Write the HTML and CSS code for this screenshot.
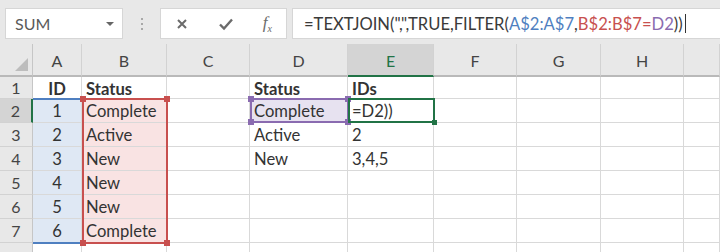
FILE: index.html
```html
<!DOCTYPE html>
<html>
<head>
  <link rel="stylesheet" href="styles.css">
  <title>TEXTJOIN FILTER</title>
</head>
<body>
  <div class="toolbar">
    <div class="namebox">
      <span>SUM</span>
      <span class="caret"></span>
    </div>
    <div class="grip"><i></i><i></i><i></i></div>
    <div class="fx-buttons">
      <svg width="14" height="14" viewBox="0 0 14 14"><path d="M3 3 L11 11 M11 3 L3 11" stroke="#6b6b6b" stroke-width="2" fill="none"/></svg>
      <svg width="16" height="14" viewBox="0 0 16 14"><path d="M2 7.5 L6 11.5 L14 2.5" stroke="#6b6b6b" stroke-width="2.4" fill="none"/></svg>
      <span class="fx">f<sub>x</sub></span>
    </div>
    <div class="formula">
      <span>=TEXTJOIN(",",TRUE,FILTER(</span><span class="ref-a">A$2:A$7</span><span>,</span><span class="ref-b">B$2:B$7=</span><span class="ref-d">D2</span><span>))</span><span class="cursor"></span>
    </div>
  </div>

  <div class="sheet">
    <div class="grid">
      <!-- column headers -->
      <div class="corner"><span class="tri"></span></div>
      <div class="colhead">A</div>
      <div class="colhead">B</div>
      <div class="colhead">C</div>
      <div class="colhead">D</div>
      <div class="colhead active">E</div>
      <div class="colhead">F</div>
      <div class="colhead">G</div>
      <div class="colhead">H</div>
      <div class="colhead"></div>

      <!-- row 1 -->
      <div class="rowhead">1</div>
      <div class="cell center bold">ID</div>
      <div class="cell bold">Status</div>
      <div class="cell"></div>
      <div class="cell bold">Status</div>
      <div class="cell bold">IDs</div>
      <div class="cell"></div>
      <div class="cell"></div>
      <div class="cell"></div>
      <div class="cell"></div>

      <!-- row 2 -->
      <div class="rowhead active">2</div>
      <div class="cell center blue">1</div>
      <div class="cell pink">Complete</div>
      <div class="cell"></div>
      <div class="cell purple">Complete</div>
      <div class="cell">=D2))</div>
      <div class="cell"></div>
      <div class="cell"></div>
      <div class="cell"></div>
      <div class="cell"></div>

      <!-- row 3 -->
      <div class="rowhead">3</div>
      <div class="cell center blue">2</div>
      <div class="cell pink">Active</div>
      <div class="cell"></div>
      <div class="cell">Active</div>
      <div class="cell">2</div>
      <div class="cell"></div>
      <div class="cell"></div>
      <div class="cell"></div>
      <div class="cell"></div>

      <!-- row 4 -->
      <div class="rowhead">4</div>
      <div class="cell center blue">3</div>
      <div class="cell pink">New</div>
      <div class="cell"></div>
      <div class="cell">New</div>
      <div class="cell">3,4,5</div>
      <div class="cell"></div>
      <div class="cell"></div>
      <div class="cell"></div>
      <div class="cell"></div>

      <!-- row 5 -->
      <div class="rowhead">5</div>
      <div class="cell center blue">4</div>
      <div class="cell pink">New</div>
      <div class="cell"></div>
      <div class="cell"></div>
      <div class="cell"></div>
      <div class="cell"></div>
      <div class="cell"></div>
      <div class="cell"></div>
      <div class="cell"></div>

      <!-- row 6 -->
      <div class="rowhead">6</div>
      <div class="cell center blue">5</div>
      <div class="cell pink">New</div>
      <div class="cell"></div>
      <div class="cell"></div>
      <div class="cell"></div>
      <div class="cell"></div>
      <div class="cell"></div>
      <div class="cell"></div>
      <div class="cell"></div>

      <!-- row 7 -->
      <div class="rowhead">7</div>
      <div class="cell center blue">6</div>
      <div class="cell pink">Complete</div>
      <div class="cell"></div>
      <div class="cell"></div>
      <div class="cell"></div>
      <div class="cell"></div>
      <div class="cell"></div>
      <div class="cell"></div>
      <div class="cell"></div>

      <!-- row 8 (only its top shows) -->
      <div class="rowhead"></div>
      <div class="cell"></div>
      <div class="cell"></div>
      <div class="cell"></div>
      <div class="cell"></div>
      <div class="cell"></div>
      <div class="cell"></div>
      <div class="cell"></div>
      <div class="cell"></div>
      <div class="cell"></div>
    </div>

    <!-- range outlines drawn over the grid -->
    <div class="range range-a"></div>
    <div class="range range-b"><i class="tl"></i><i class="tr"></i><i class="bl"></i><i class="br"></i></div>
    <div class="range range-d"><i class="tl"></i><i class="tr"></i><i class="bl"></i><i class="br"></i></div>
    <div class="range range-e"><i class="br"></i></div>
  </div>
</body>
</html>
```

FILE: styles.css
```css
/* Excel formula bar + sheet */
body {
  margin: 0;
  height: 252px;
  background-color: #fff;
  font-family: Lato, "Open Sans", sans-serif;
  color: #333;
  overflow: hidden;
}

.toolbar {
  height: 44px;
  background-color: #e8e8e8;
  display: flex;
  align-items: flex-start;
  padding-top: 8px;
  box-sizing: border-box;
}

.namebox {
  width: 118px;
  height: 31px;
  margin-left: 5px;
  box-sizing: border-box;
  background-color: #fff;
  border: 1px solid #d6d6d6;
  display: flex;
  align-items: center;
  justify-content: space-between;
  padding: 0 8px 0 9px;
  font-size: 16px;
  color: #5a5a5a;
}

.caret {
  width: 0;
  height: 0;
  border-left: 4px solid transparent;
  border-right: 4px solid transparent;
  border-top: 4px solid #666;
}

.grip {
  width: 37px;
  height: 31px;
  display: flex;
  flex-direction: column;
  align-items: center;
  justify-content: center;
  gap: 3px;
}

.grip i {
  width: 2px;
  height: 2px;
  background-color: #a8a8a8;
}

.fx-buttons {
  width: 127px;
  height: 31px;
  box-sizing: border-box;
  background-color: #fff;
  border: 1px solid #d6d6d6;
  display: flex;
  align-items: center;
  justify-content: space-between;
  padding: 0 14px 0 14px;
}

.fx {
  font-family: "Liberation Serif", serif;
  font-style: italic;
  font-size: 17px;
  color: #6b6b6b;
}

.fx sub {
  font-size: 10px;
}

.formula {
  flex: 1;
  height: 31px;
  margin-left: 5px;
  box-sizing: border-box;
  background-color: #fff;
  border: 1px solid #d6d6d6;
  border-right: none;
  display: flex;
  align-items: center;
  padding-left: 11px;
  font-size: 16.6px;
  color: #3a3a3a;
  white-space: pre;
}

.ref-a { color: #4f7fc0; }
.ref-b { color: #c8504f; }
.ref-d { color: #8a6bb0; }

.cursor {
  width: 1px;
  height: 19px;
  margin-left: 2px;
  background-color: #333;
}

/* sheet */
.sheet {
  position: relative;
}

.grid {
  display: grid;
  grid-template-columns: 33px 49px 85px 83px 98px 86px 83px 84px 83px 1fr;
  grid-template-rows: 33px 22px repeat(6, 24px) 10px;
}

.corner {
  background-color: #e8e8e8;
  border-right: 1px solid #c6c6c6;
  border-bottom: 2px solid #b9b9b9;
  position: relative;
}

.tri {
  position: absolute;
  right: 4px;
  bottom: 4px;
  width: 0;
  height: 0;
  border-left: 13px solid transparent;
  border-bottom: 13px solid #bdbdbd;
}

.colhead {
  background-color: #e8e8e8;
  border-right: 1px solid #d2d2d2;
  border-bottom: 2px solid #b9b9b9;
  display: flex;
  align-items: center;
  justify-content: center;
  font-size: 16px;
  color: #444;
  padding-top: 2px;
}

.colhead.active {
  background-color: #d4d4d4;
  color: #217346;
  border-bottom-color: #217346;
}

.rowhead {
  background-color: #e8e8e8;
  border-right: 1px solid #c6c6c6;
  border-bottom: 1px solid #d2d2d2;
  display: flex;
  align-items: center;
  justify-content: center;
  font-size: 16px;
  color: #444;
}

.rowhead.active {
  background-color: #d4d4d4;
  border-right: 2px solid #217346;
}

.cell {
  border-right: 1px solid #d9d9d9;
  border-bottom: 1px solid #d9d9d9;
  display: flex;
  align-items: center;
  padding-left: 4px;
  font-size: 16.6px;
  color: #333;
  white-space: nowrap;
  overflow: hidden;
}

.cell.center {
  justify-content: center;
  padding-left: 0;
}

.cell.bold {
  font-weight: bold;
  padding-top: 2px;
}

.cell.blue { background-color: #dfe8f4; }
.cell.pink { background-color: #f9e3e3; }
.cell.purple { background-color: #e7e2f0; }

/* range outlines */
.range {
  position: absolute;
  box-sizing: border-box;
  border: 2px solid;
}

.range i {
  position: absolute;
  width: 6px;
  height: 6px;
}

.range .tl { left: -4px; top: -4px; }
.range .tr { right: -4px; top: -4px; }
.range .bl { left: -4px; bottom: -4px; }
.range .br { right: -4px; bottom: -4px; }

.range-a {
  left: 33px;
  top: 54px;
  width: 50px;
  height: 146px;
  border-color: #4f7fc0;
  border-left: none;
  border-right: none;
}

.range-b {
  left: 82px;
  top: 54px;
  width: 86px;
  height: 146px;
  border-color: #c8504f;
}

.range-b i { background-color: #c8504f; }

.range-d {
  left: 250px;
  top: 54px;
  width: 99px;
  height: 25px;
  border-color: #8a6bb0;
}

.range-d i { background-color: #8a6bb0; }

.range-e {
  left: 348px;
  top: 54px;
  width: 87px;
  height: 25px;
  border-color: #217346;
}

.range-e i {
  background-color: #217346;
  width: 5px;
  height: 5px;
  right: -3px;
  bottom: -3px;
}
```
